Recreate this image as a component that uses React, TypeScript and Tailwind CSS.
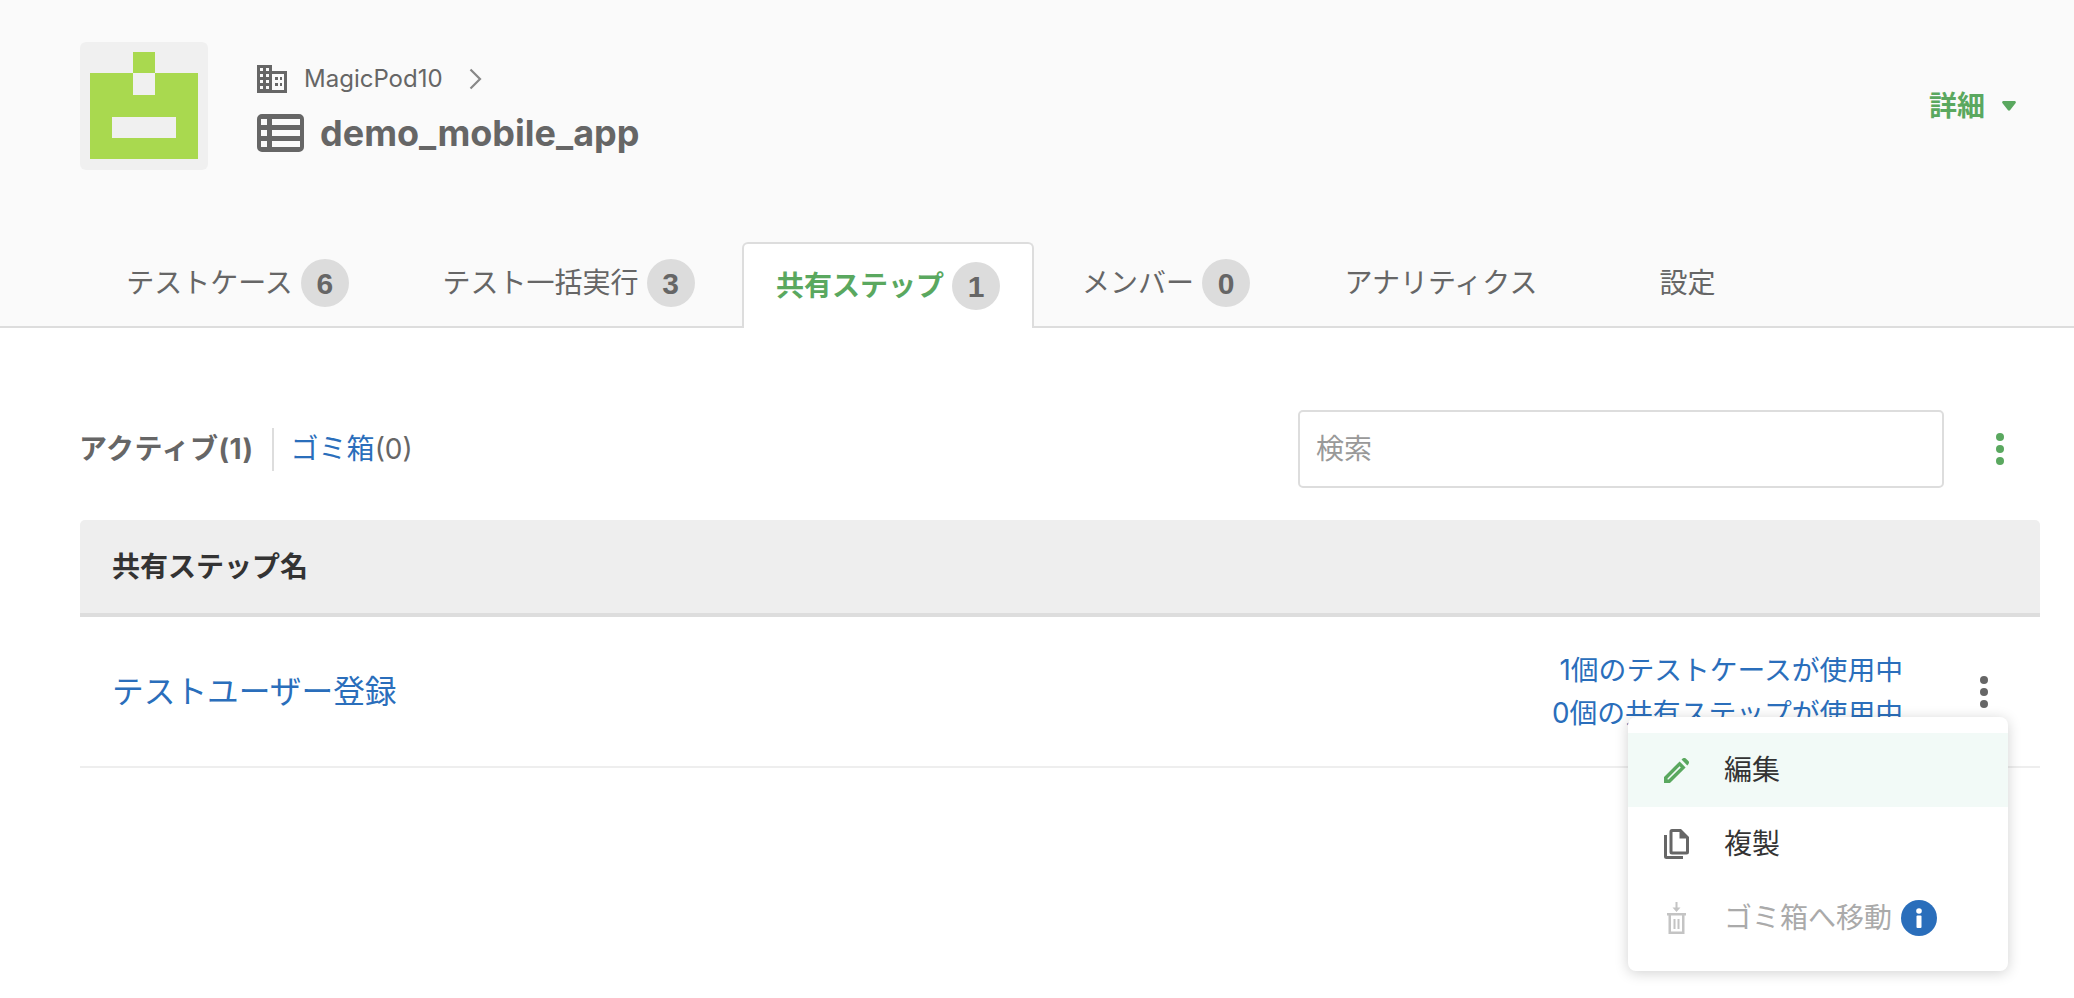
import React from 'react';

const FONT = 'font-["Inter","Noto_Sans_CJK_JP","Noto_Sans",sans-serif]';

const Badge = ({ value }: { value: number }) => (
  <span className='ml-[8px] flex h-[48px] w-[48px] items-center justify-center rounded-full bg-[#dcdcdc] font-["Liberation_Sans",sans-serif] text-[30px] font-bold text-[#666666]'>
    {value}
  </span>
);

const Tab = ({
  label,
  count,
  width,
  active,
}: {
  label: string;
  count?: number;
  width: string;
  active?: boolean;
}) => {
  if (active) {
    return (
      <div
        className={`${width} relative -mb-[2px] flex h-[86px] items-center justify-center rounded-t-[6px] border-2 border-b-0 border-[#dddddd] bg-white`}
      >
        <span className="text-[28px] font-bold text-[#5aa85f]">{label}</span>
        {count !== undefined && <Badge value={count} />}
      </div>
    );
  }
  return (
    <div className={`${width} flex h-[84px] items-center justify-center pb-[2px]`}>
      <span className="text-[28px] text-[#666666]">{label}</span>
      {count !== undefined && <Badge value={count} />}
    </div>
  );
};

const Dots = ({ color }: { color: string }) => (
  <div className="flex flex-col gap-[4px]">
    <span className={`h-[8px] w-[8px] rounded-full ${color}`} />
    <span className={`h-[8px] w-[8px] rounded-full ${color}`} />
    <span className={`h-[8px] w-[8px] rounded-full ${color}`} />
  </div>
);

const Logo = () => (
  <svg width="128" height="128" viewBox="0 0 128 128" className="shrink-0">
    <rect width="128" height="128" rx="6" fill="#f0f0f0" />
    <rect x="10" y="31" width="108" height="86" fill="#a9d94f" />
    <rect x="53" y="10" width="22" height="21" fill="#a9d94f" />
    <rect x="53" y="31" width="22" height="22" fill="#f0f0f0" />
    <rect x="32" y="75" width="64" height="21" fill="#f0f0f0" />
  </svg>
);

const BuildingIcon = () => (
  <svg width="30" height="28" viewBox="0 0 30 28" fill="#666666">
    <path
      fillRule="evenodd"
      d="M0 0h15v6h15v22H0zM3 3v3h3V3zm6 0v3h3V3zM3 9v3h3V9zm6 0v3h3V9zM3 15v3h3v-3zm6 0v3h3v-3zM3 21v3h3v-3zm6 0v3h3v-3zM15 9v16h12V9zm3 3h3v3h-3zm5 0h2v3h-2zm-5 6h3v3h-3zm5 0h2v3h-2z"
    />
  </svg>
);

const TableIcon = () => (
  <svg width="47" height="38" viewBox="0 0 47 38" fill="#666666">
    <path
      fillRule="evenodd"
      d="M5 0h37a5 5 0 0 1 5 5v28a5 5 0 0 1-5 5H5a5 5 0 0 1-5-5V5a5 5 0 0 1 5-5zM4 5v6h6V5zm11 0v6h28V5zM4 16v6h6v-6zm11 0v6h28v-6zM4 27v6h6v-6zm11 0v6h28v-6z"
    />
  </svg>
);

const PencilIcon = () => (
  <svg width="25" height="25" viewBox="0 0 25 25" fill="#5aa85f">
    <path
      fillRule="evenodd"
      d="M0 19 15.600 3.400l6 6L6 25H0zM3.500 20.500V21.500h1L16.800 9.400l-1.200-1.200z"
    />
    <path d="M17.500 1.500 19 .3c.8-.6 2-.6 2.800.2l2.600 2.600c.8.8.8 2 .1 2.800L23.300 7.500z" />
  </svg>
);

const CopyIcon = () => (
  <svg width="25" height="30" viewBox="0 0 25 30" fill="#666666">
    <path
      fillRule="evenodd"
      d="M8 0h9l8 8v15a2.500 2.500 0 0 1-2.500 2.500H8A2.500 2.500 0 0 1 5.500 23V2.500A2.500 2.500 0 0 1 8 0zm.5 3v19.500h13.500V9.500h-6.500V3z"
    />
    <path d="M0 6h3v21h16v3H2.500A2.500 2.500 0 0 1 0 27.500z" />
  </svg>
);

const TrashMoveIcon = () => (
  <svg width="19" height="32" viewBox="0 0 19 32" fill="#c4c4c4">
    <path d="M8.500 0h2v5.500h3L9.500 10l-4-4.500h3z" />
    <path
      fillRule="evenodd"
      d="M0 11h19v2.500h-1.500V32h-16V13.500H0zm4 2.500V29.500h11V13.500z"
    />
    <path d="M6.500 17h2v10h-2zM10.500 17h2v10h-2z" />
  </svg>
);

const InfoIcon = () => (
  <span className="ml-[9px] flex h-[36px] w-[36px] items-center justify-center rounded-full bg-[#2a6ebb]">
    <svg width="6" height="20" viewBox="0 0 6 20" fill="#ffffff">
      <circle cx="3" cy="3" r="2.800" />
      <rect x="0.500" y="7.500" width="5" height="12.500" rx="1" />
    </svg>
  </span>
);

const MenuItem = ({
  icon,
  children,
  highlighted,
}: {
  icon: React.ReactNode;
  children: React.ReactNode;
  highlighted?: boolean;
}) => (
  <div className={`flex h-[74px] items-center ${highlighted ? 'bg-[#f2faf7]' : ''}`}>
    <span className="flex w-[96px] items-center justify-center">{icon}</span>
    {children}
  </div>
);

export default function App() {
  return (
    <div className={`h-[998px] w-[2074px] overflow-hidden bg-white ${FONT}`}>
      <header className="h-[328px] border-b-2 border-[#dddddd] bg-[#fafafa]">
        <div className="flex h-[242px] items-start pl-[80px] pr-[58px] pt-[42px]">
          <Logo />
          <div className="ml-[49px] mt-[21px] flex flex-col">
            <div className="flex h-[32px] items-center">
              <BuildingIcon />
              <span className="ml-[17px] text-[24px] text-[#666666]">MagicPod10</span>
              <svg width="13" height="22" viewBox="0 0 13 22" className="ml-[26px]" fill="none" stroke="#888888" strokeWidth="2.200">
                <path d="M1.500 1.500 11 11l-9.500 9.500" />
              </svg>
            </div>
            <div className="mt-[14px] flex items-center">
              <TableIcon />
              <span className="ml-[16px] text-[36px] font-bold leading-[48px] text-[#666666]">demo_mobile_app</span>
            </div>
          </div>
          <div className="ml-auto mt-[43px] flex items-center">
            <span className="text-[28px] font-bold text-[#5aa85f]">詳細</span>
            <svg width="14" height="10" viewBox="0 0 14 10" className="ml-[17px]" fill="#5aa85f">
              <path d="M1.500 0h11c1.200 0 1.800 1.300 1 2.200L8 9.300c-.5.600-1.500.600-2 0L.5 2.200C-.3 1.300.3 0 1.500 0z" />
            </svg>
          </div>
        </div>
        <nav className="flex items-end gap-[16px] pl-[80px]">
          <Tab label="テストケース" count={6} width="w-[315px]" />
          <Tab label="テスト一括実行" count={3} width="w-[315px]" />
          <Tab label="共有ステップ" count={1} width="w-[292px]" active />
          <Tab label="メンバー" count={0} width="w-[232px]" />
          <Tab label="アナリティクス" width="w-[286px]" />
          <Tab label="設定" width="w-[175px]" />
        </nav>
      </header>

      <main className="pl-[80px] pr-[34px]">
        <div className="flex h-[192px] items-start pt-[82px]">
          <div className="flex h-[78px] items-center">
            <span className="-ml-[1px] text-[28px] font-bold tracking-[0.5px] text-[#666666]">アクティブ(1)</span>
            <span className="ml-[18px] h-[43px] w-[2px] bg-[#dddddd]" />
            <span className="ml-[17px] text-[28px] text-[#2a6ebb]">ゴミ箱</span>
            <span className="text-[28px] text-[#666666]">(0)</span>
          </div>
          <div className="ml-auto flex h-[78px] w-[646px] items-center rounded-[5px] border-2 border-[#dddddd] bg-white pl-[16px]">
            <span className="text-[28px] text-[#999999]">検索</span>
          </div>
          <div className="ml-[52px] mr-[36px] flex h-[78px] items-center">
            <Dots color="bg-[#5aa85f]" />
          </div>
        </div>

        <div className="flex h-[97px] items-center rounded-t-[5px] border-b-[4px] border-[#dddddd] bg-[#eeeeee] pl-[32px]">
          <span className="text-[28px] font-bold text-[#333333]">共有ステップ名</span>
        </div>

        <div className="relative flex h-[151px] items-center border-b-2 border-[#eeeeee] pl-[32px]">
          <span className="text-[31.7px] text-[#2a6ebb]">テストユーザー登録</span>
          <div className="ml-auto flex flex-col items-end text-[27.8px] leading-[43px] text-[#2a6ebb]">
            <span>1個のテストケースが使用中</span>
            <span>0個の共有ステップが使用中</span>
          </div>
          <div className="ml-[77px] mr-[52px]">
            <Dots color="bg-[#666666]" />
          </div>

          <div className="absolute right-[32px] top-[100px] z-10 w-[380px] rounded-[8px] bg-white py-[16px] shadow-[0_2px_14px_rgba(0,0,0,0.18)]">
            <MenuItem icon={<PencilIcon />} highlighted>
              <span className="text-[28px] text-[#333333]">編集</span>
            </MenuItem>
            <MenuItem icon={<CopyIcon />}>
              <span className="text-[28px] text-[#333333]">複製</span>
            </MenuItem>
            <MenuItem icon={<TrashMoveIcon />}>
              <span className="text-[28px] text-[#aaaaaa]">ゴミ箱へ移動</span>
              <InfoIcon />
            </MenuItem>
          </div>
        </div>
      </main>
    </div>
  );
}
